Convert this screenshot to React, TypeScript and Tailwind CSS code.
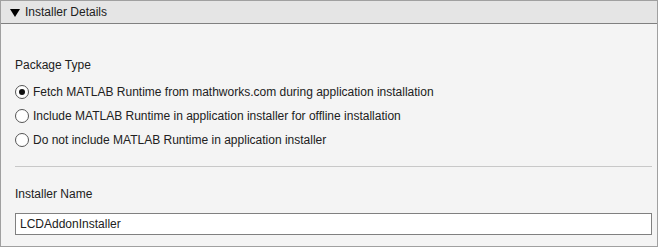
export default function App() {
  const options = [
    "Fetch MATLAB Runtime from mathworks.com during application installation",
    "Include MATLAB Runtime in application installer for offline installation",
    "Do not include MATLAB Runtime in application installer",
  ]

  return (
    <div className="w-[658px] h-[247px] border border-[#a0a0a0] bg-[#f4f4f4] flex flex-col text-[12px] text-[#212121] font-['Liberation_Sans',Arial,sans-serif]">
      {/* Header */}
      <div className="h-[23px] bg-[#e5e5e5] border-b border-[#808080] flex items-center pl-[9px] gap-[5px] shrink-0">
        <svg width="10" height="9" viewBox="0 0 10 9">
          <polygon points="0,1 10,1 5,9" fill="#000" />
        </svg>
        <span className="text-[12px]">Installer Details</span>
      </div>

      <div className="pl-[14px] pr-[5px] flex flex-col">
        <div className="mt-[34px] leading-[15px]">Package Type</div>

        <div className="mt-[11px] flex flex-col gap-[9px]">
          {options.map((opt, i) => (
            <label key={i} className="flex items-center gap-[4px] h-[15px]">
              <span className="w-[14px] h-[14px] rounded-full border border-[#555] bg-white flex items-center justify-center">
                {i === 0 && <span className="w-[6px] h-[6px] rounded-full bg-[#111]" />}
              </span>
              <span>{opt}</span>
            </label>
          ))}
        </div>

        <div className="mt-[19px] h-px bg-[#c8c8c8]" />

        <div className="mt-[20px] leading-[15px]">Installer Name</div>

        <div className="mt-[11px] h-[22px] border border-[#808080] bg-white flex items-center px-[4px]">
          LCDAddonInstaller
        </div>
      </div>
    </div>
  )
}
